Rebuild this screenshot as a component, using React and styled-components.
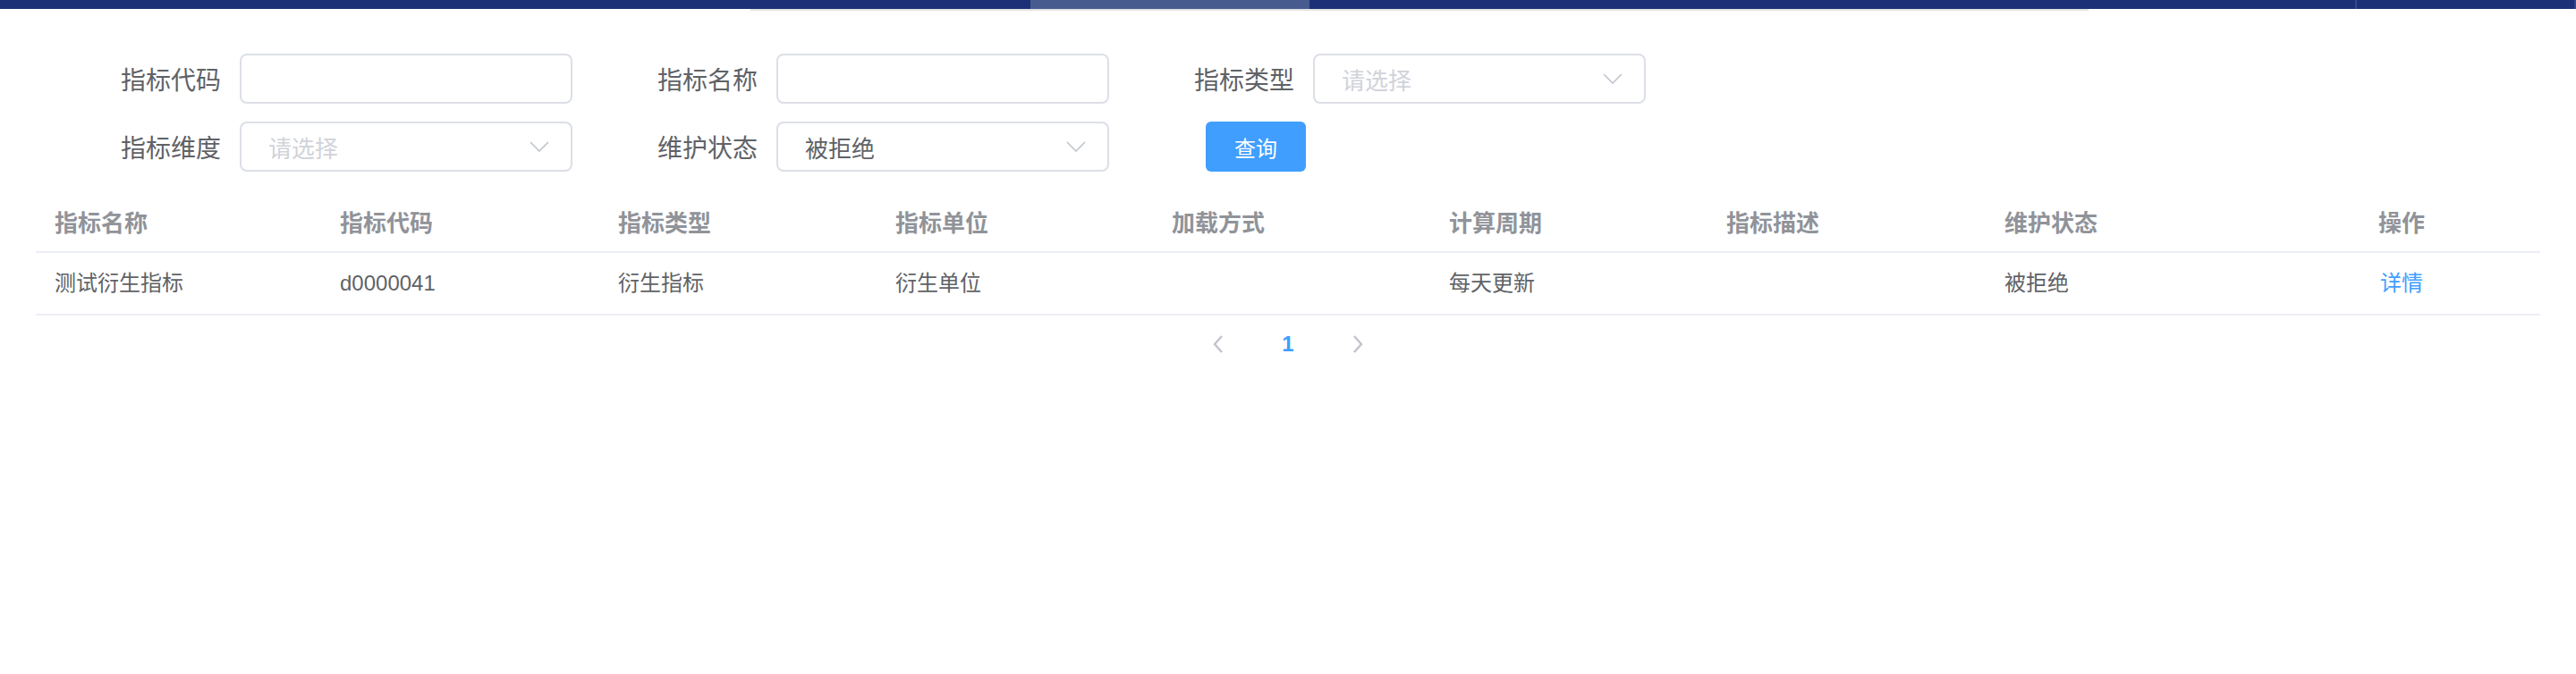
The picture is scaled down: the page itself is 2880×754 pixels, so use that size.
import React from "react";
import styled, { createGlobalStyle } from "styled-components";

const GlobalStyle = createGlobalStyle`
  body {
    margin: 0;
    background: #fff;
    font-family: "Liberation Sans", "Noto Sans CJK SC", sans-serif;
  }
`;

const Page = styled.div`
  width: 2880px;
  min-height: 754px;
  background: #fff;
`;

const TopBar = styled.div`
  display: flex;
  height: 10px;
  background: #1b3076;
`;

const BarSegment = styled.div`
  width: ${(p) => (p.$w ? `${p.$w}px` : "auto")};
  flex: ${(p) => (p.$grow ? 1 : "none")};
  background: ${(p) => (p.$active ? "#485b8f" : "#1b3076")};
`;

const BarDivider = styled.div`
  width: 2px;
  background: #34478a;
`;

const TabLine = styled.div`
  height: 2px;
  margin-left: 839px;
  width: 1496px;
  background: #e2e2e4;
`;

const SearchForm = styled.div`
  display: grid;
  grid-template-columns: repeat(3, 572px);
  column-gap: 28px;
  row-gap: 20px;
  padding: 48px 0 0 68px;
`;

const FormItem = styled.div`
  display: flex;
  align-items: center;
  height: 56px;
`;

const Label = styled.label`
  width: 200px;
  box-sizing: border-box;
  padding-right: 21px;
  text-align: right;
  font-size: 28px;
  color: #606266;
`;

const TextInput = styled.input`
  width: 372px;
  height: 56px;
  box-sizing: border-box;
  border: 2px solid #dcdfe6;
  border-radius: 8px;
  padding: 0 30px;
  font-size: 26px;
  color: #606266;
  font-family: inherit;
  outline: none;
`;

const SelectBox = styled.div`
  width: 372px;
  height: 56px;
  box-sizing: border-box;
  border: 2px solid #dcdfe6;
  border-radius: 8px;
  padding: 0 24px 0 30px;
  display: flex;
  align-items: center;
  justify-content: space-between;
`;

const SelectValue = styled.span`
  font-size: 26px;
  color: ${(p) => (p.$placeholder ? "#d0d3d9" : "#606266")};
`;

const ButtonCell = styled.div`
  display: flex;
  align-items: center;
  padding-left: 80px;
`;

const QueryButton = styled.button`
  width: 112px;
  height: 56px;
  border: none;
  border-radius: 6px;
  background: #409eff;
  color: #fff;
  font-size: 24px;
  font-family: inherit;
`;

const Table = styled.table`
  margin: 27px 40px 0;
  width: 2800px;
  border-collapse: collapse;
  table-layout: fixed;
`;

const HeadCell = styled.th`
  padding: 13px 21px;
  line-height: 36px;
  font-size: 26px;
  font-weight: bold;
  color: #909399;
  text-align: ${(p) => (p.$center ? "center" : "left")};
  border-bottom: 2px solid #ebeef5;
`;

const Cell = styled.td`
  padding: 16px 21px;
  line-height: 36px;
  font-size: 24px;
  color: #606266;
  text-align: ${(p) => (p.$center ? "center" : "left")};
  border-bottom: 2px solid #ebeef5;
`;

const LinkText = styled.span`
  color: #409eff;
`;

const Pager = styled.div`
  display: flex;
  justify-content: center;
  align-items: center;
  height: 56px;
  margin-top: 4px;
`;

const PageButton = styled.div`
  width: 78px;
  height: 56px;
  display: flex;
  align-items: center;
  justify-content: center;
  font-size: 24px;
  font-weight: bold;
  color: ${(p) => (p.$current ? "#409eff" : "#c0c4cc")};
`;

const ChevronDown = () => (
  <svg width="22" height="12" viewBox="0 0 22 12">
    <path d="M1 1 L11 11 L21 1" fill="none" stroke="#c0c4cc" strokeWidth="1.6" />
  </svg>
);

const Arrow = ({ dir }) => (
  <svg width="12" height="20" viewBox="0 0 12 20">
    <path
      d={dir === "left" ? "M10 1 L2 10 L10 19" : "M2 1 L10 10 L2 19"}
      fill="none"
      stroke="#c0c4cc"
      strokeWidth="2.4"
    />
  </svg>
);

const Select = ({ value, placeholder }) => (
  <SelectBox>
    <SelectValue $placeholder={!value}>{value || placeholder}</SelectValue>
    <ChevronDown />
  </SelectBox>
);

const columns = [
  { title: "指标名称", key: "name", width: 319 },
  { title: "指标代码", key: "code", width: 311 },
  { title: "指标类型", key: "type", width: 310 },
  { title: "指标单位", key: "unit", width: 309 },
  { title: "加载方式", key: "load", width: 310 },
  { title: "计算周期", key: "cycle", width: 310 },
  { title: "指标描述", key: "desc", width: 311 },
  { title: "维护状态", key: "status", width: 310 },
  { title: "操作", key: "op", width: 310, center: true },
];

const rows = [
  {
    name: "测试衍生指标",
    code: "d0000041",
    type: "衍生指标",
    unit: "衍生单位",
    load: "",
    cycle: "每天更新",
    desc: "",
    status: "被拒绝",
  },
];

const App = () => {
  return (
    <Page>
      <GlobalStyle />
      <TopBar>
        <BarSegment $w={1152} />
        <BarSegment $w={312} $active />
        <BarSegment $w={1169} />
        <BarDivider />
        <BarSegment $grow />
        <BarDivider />
      </TopBar>
      <TabLine />

      <SearchForm>
        <FormItem>
          <Label>指标代码</Label>
          <TextInput />
        </FormItem>
        <FormItem>
          <Label>指标名称</Label>
          <TextInput />
        </FormItem>
        <FormItem>
          <Label>指标类型</Label>
          <Select placeholder="请选择" />
        </FormItem>
        <FormItem>
          <Label>指标维度</Label>
          <Select placeholder="请选择" />
        </FormItem>
        <FormItem>
          <Label>维护状态</Label>
          <Select value="被拒绝" />
        </FormItem>
        <ButtonCell>
          <QueryButton>查询</QueryButton>
        </ButtonCell>
      </SearchForm>

      <Table>
        <colgroup>
          {columns.map((c) => (
            <col key={c.key} style={{ width: c.width }} />
          ))}
        </colgroup>
        <thead>
          <tr>
            {columns.map((c) => (
              <HeadCell key={c.key} $center={c.center}>
                {c.title}
              </HeadCell>
            ))}
          </tr>
        </thead>
        <tbody>
          {rows.map((r) => (
            <tr key={r.code}>
              {columns.map((c) =>
                c.key === "op" ? (
                  <Cell key={c.key} $center>
                    <LinkText>详情</LinkText>
                  </Cell>
                ) : (
                  <Cell key={c.key}>{r[c.key]}</Cell>
                )
              )}
            </tr>
          ))}
        </tbody>
      </Table>

      <Pager>
        <PageButton>
          <Arrow dir="left" />
        </PageButton>
        <PageButton $current>1</PageButton>
        <PageButton>
          <Arrow dir="right" />
        </PageButton>
      </Pager>
    </Page>
  );
};

export default App;
